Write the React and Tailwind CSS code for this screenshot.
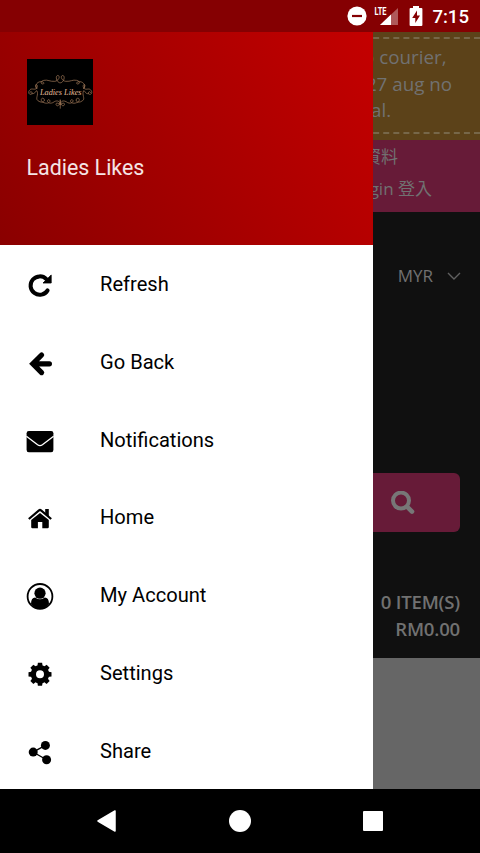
const RefreshIcon = () => (
  <svg viewBox="0 0 28 28" className="h-7 w-7">
    <path d="M21.6 19.4A9.2 9.2 0 1 1 20.4 8.2" fill="none" stroke="currentColor" strokeWidth="4" strokeLinecap="round" />
    <path d="M25.2 4V12H17Z" fill="currentColor" stroke="currentColor" strokeWidth="0.8" strokeLinejoin="round" />
  </svg>
)

const BackIcon = () => (
  <svg viewBox="0 0 28 28" className="h-7 w-7">
    <path d="M15.6 6L6.8 14.8L15.6 23.6M7.4 14.8H23.4" fill="none" stroke="currentColor" strokeWidth="5.2" strokeLinecap="round" />
  </svg>
)

const MailIcon = () => (
  <svg viewBox="0 0 28 28" className="h-7 w-7">
    <rect x="0.6" y="4" width="26.8" height="21.2" rx="2.2" fill="currentColor" />
    <path d="M0.4 9.2L11.6 17.8Q14 19.4 16.4 17.8L27.6 9.2" fill="none" stroke="#fff" strokeWidth="1.3" />
  </svg>
)

const HomeIcon = () => (
  <svg viewBox="0 0 28 28" className="h-7 w-7">
    <path d="M14 9L22.8 16V23Q22.8 24.2 21.6 24.2H16.3V18.1H11.9V24.2H6.4Q5.2 24.2 5.2 23V16Z" fill="currentColor" />
    <path d="M2.8 15L13 6.4Q14 5.6 15 6.4L25.2 15" fill="none" stroke="currentColor" strokeWidth="2.2" />
    <path d="M19.2 5H22.8V13.2L19.2 10.2Z" fill="currentColor" />
  </svg>
)

const AccountIcon = () => (
  <svg viewBox="0 0 28 28" className="h-7 w-7">
    <circle cx="14" cy="14.4" r="12.4" fill="none" stroke="currentColor" strokeWidth="1.8" />
    <circle cx="14" cy="11.2" r="5.6" fill="currentColor" />
    <path d="M5 21.8Q5.2 15.4 9.2 15.4Q14 19.2 18.8 15.4Q22.8 15.4 23 21.8Q19.5 26.8 14 26.8Q8.5 26.8 5 21.8Z" fill="currentColor" />
  </svg>
)

const SettingsIcon = () => (
  <svg viewBox="0 0 28 28" className="h-7 w-7">
    <circle cx="14" cy="14.3" r="6.6" fill="none" stroke="currentColor" strokeWidth="5.2" />
    <g fill="currentColor">
      {[0, 45, 90, 135, 180, 225, 270, 315].map(a => (
        <path key={a} d="M11.9 2.8H16.1L16.7 6.8H11.3Z" transform={`rotate(${a} 14 14.3)`} />
      ))}
    </g>
  </svg>
)

const ShareIcon = () => (
  <svg viewBox="0 0 28 28" className="h-7 w-7">
    <path d="M19.4 7.4L7 14.1L20.6 21.8" fill="none" stroke="currentColor" strokeWidth="1.3" />
    <circle cx="19.4" cy="7.4" r="4.5" fill="currentColor" />
    <circle cx="7.2" cy="14.1" r="4.5" fill="currentColor" />
    <circle cx="20.6" cy="21.8" r="4.5" fill="currentColor" />
  </svg>
)

const menu = [
  { label: 'Refresh', Icon: RefreshIcon },
  { label: 'Go Back', Icon: BackIcon },
  { label: 'Notifications', Icon: MailIcon },
  { label: 'Home', Icon: HomeIcon },
  { label: 'My Account', Icon: AccountIcon },
  { label: 'Settings', Icon: SettingsIcon },
  { label: 'Share', Icon: ShareIcon },
]

const StatusBar = () => (
  <div className="flex h-8 items-center justify-end bg-[#850002] pr-[11px] text-white">
    <svg viewBox="0 0 20 20" className="mr-[7px] h-5 w-5">
      <circle cx="10" cy="10" r="9.6" fill="#fff" />
      <path d="M5 10H15" stroke="#850002" strokeWidth="2.2" />
    </svg>
    <svg viewBox="0 0 25 20" className="mr-[10px] h-5 w-[25px]">
      <path d="M24 2V19H6Z" fill="#fff" opacity="0.35" />
      <path d="M17 8.6V19H6Z" fill="#fff" />
      <text x="0.5" y="9" fill="#fff" fontSize="11" fontWeight="700" fontFamily="Roboto, sans-serif" textLength="12" lengthAdjust="spacingAndGlyphs">LTE</text>
    </svg>
    <svg viewBox="0 0 14 20" className="mr-[9px] h-5 w-[14px]">
      <path d="M4 0H10V2H12.4Q13.4 2 13.4 3V19Q13.4 20 12.4 20H1.6Q0.6 20 0.6 19V3Q0.6 2 1.6 2H4Z" fill="#fff" />
      <path d="M8 4.6L3.2 12H6.3V17L11 9.6H8Z" fill="#850002" />
    </svg>
    <span className="pt-px text-[18.6px] leading-8 font-medium">7:15</span>
  </div>
)

const Logo = () => (
  <svg viewBox="0 0 67 67" className="h-[66.5px] w-[66.5px] bg-black">
    <g fill="none" stroke="#a57d5c" strokeWidth="0.7">
      {['', 'matrix(-1 0 0 1 67 0)'].map(t => (
        <g key={t} transform={t}>
          <path d="M33.5 24C30 24 28 17 31 16.6C34 17 32 22 28 22.5C23 23 21 20.5 17 21.5C14 22 13 25 16 25.2C18 25 17 22.6 14 22.8C9 23 8 28 10 30" />
          <path d="M10 30C6 24 12 25 10 29C8 32 5 29 3 31C0 34 3 37 5 35C6 33 3 32 3 34M5 35C9 35 8 32 10 32C12 36 8 40 11 42" />
          <path d="M11 42C15 45 19 43 17 40C14 38 13 43 17 44C22 46 25 42 22 41C19 41 21 46 26 44C30 41 33 42 33.5 46C30 43 28 45 30 47C32 48 34 44 33.5 41" />
        </g>
      ))}
      <path d="M33.5 46V50" />
    </g>
    <text x="13" y="36" fill="#e3bb98" fontSize="7.5" fontStyle="italic" fontFamily="Liberation Serif, serif" textLength="42" lengthAdjust="spacingAndGlyphs">Ladies Likes</text>
  </svg>
)

// storefront, already dimmed behind the open drawer
const Store = () => (
  <div className="flex h-full flex-col bg-[#666] font-['Open_Sans','Noto_Sans_CJK_TC',sans-serif] text-[#717171]">
    <div className="h-[108px] bg-[#5c4219] pt-[5px]">
      <div className="h-[97px] border-y-2 border-dashed border-[#776749] pt-[5px] pl-[361px] text-[18.8px] leading-[26.5px] whitespace-nowrap">
        <div className="pl-[2px]">o courier,</div>
        <div>&nbsp;27 aug no</div>
        <div className="pl-[10px]">al.</div>
      </div>
    </div>
    <div className="h-[72px] bg-[#671b38] pt-px pr-[48px] text-right text-[17px] leading-8">
      <div className="pr-[34px]">個人資料</div>
      <div>Login 登入</div>
    </div>
    <div className="flex h-[446px] flex-col items-end bg-[#101010] pr-5">
      <div className="mt-[52px] -mr-px flex h-6 items-center gap-[14px] text-[17px]">
        MYR
        <svg viewBox="0 0 14 8" className="h-2 w-[14px]">
          <path d="M1 1L7 7L13 1" fill="none" stroke="#606060" strokeWidth="1.4" />
        </svg>
      </div>
      <div className="mt-[185px] flex h-[59px] w-[440px] items-center justify-end rounded-md bg-[#671b38] pr-[45px]">
        <svg viewBox="0 0 24 24" className="h-6 w-6">
          <circle cx="10" cy="9.6" r="8" fill="none" stroke="#777" strokeWidth="4" />
          <path d="M16 15.6L21 20.6" stroke="#777" strokeWidth="4.6" strokeLinecap="round" />
        </svg>
      </div>
      <div className="mt-[57px] text-right text-[18.6px] leading-[26.5px] font-semibold tracking-[-0.2px]">
        <div>0 ITEM(S)</div>
        <div>RM0.00</div>
      </div>
    </div>
  </div>
)

const Drawer = () => (
  <div className="absolute inset-y-0 left-0 flex w-[373.4px] flex-col bg-white">
    <div className="h-[213px] bg-linear-[60deg,#8a0000,#c40000] px-[26.5px] pt-[26.5px]">
      <Logo />
      <div className="mt-[27px] text-[21.4px] leading-8 text-white/90">Ladies Likes</div>
    </div>
    <div className="grid flex-1 grid-rows-7 text-black">
      {menu.map(({ label, Icon }) => (
        <div key={label} className="flex items-center pt-px pl-[26px]">
          <div className="mt-[2px] mr-[46px]"><Icon /></div>
          <div className="text-[20.1px]">{label}</div>
        </div>
      ))}
    </div>
  </div>
)

export default function App() {
  return (
    <div className="flex h-[853px] w-[480px] flex-col overflow-hidden font-[Roboto,sans-serif]">
      <StatusBar />
      <div className="relative h-[757px]">
        <Store />
        <Drawer />
      </div>
      <div className="flex h-16 items-center justify-between bg-black px-[96px]">
        <svg viewBox="0 0 22 24" className="h-6 w-[22px]">
          <path d="M19 2V22L2 12Z" fill="#fff" stroke="#fff" strokeWidth="1.5" strokeLinejoin="round" />
        </svg>
        <div className="mr-[2px] h-[22px] w-[22px] rounded-full bg-white" />
        <div className="mr-px h-5 w-5 rounded-[1px] bg-white" />
      </div>
    </div>
  )
}
